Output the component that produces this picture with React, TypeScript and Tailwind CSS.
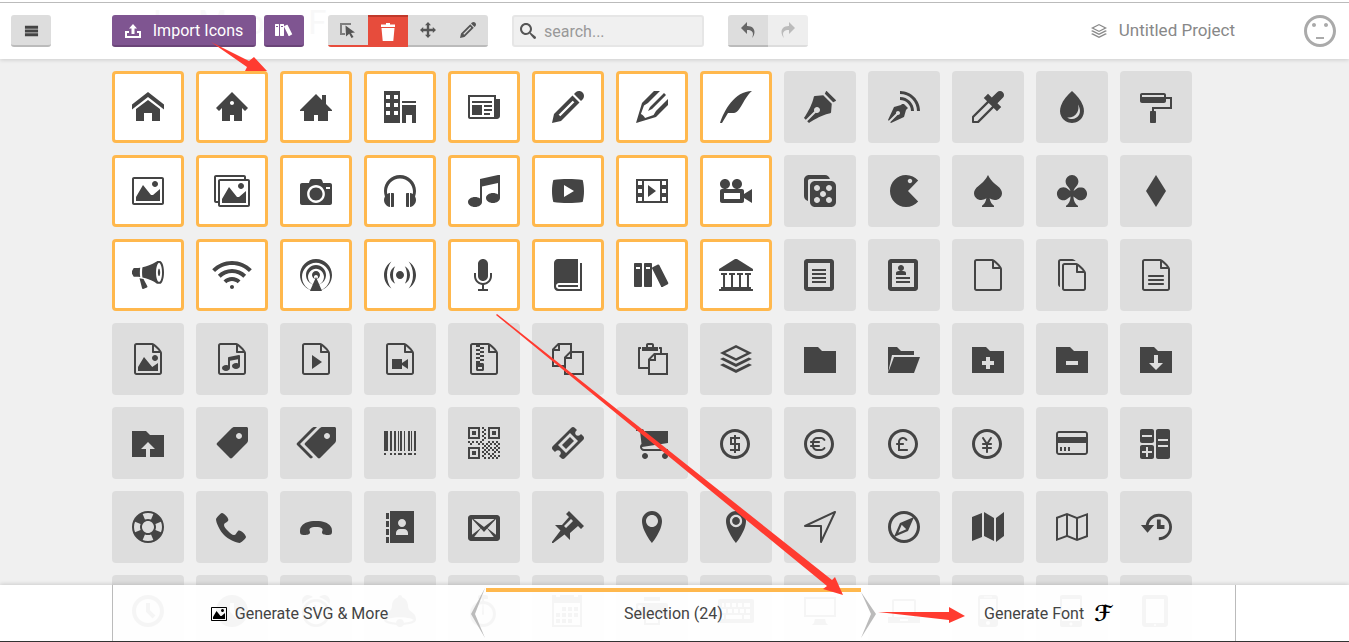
import { IconType } from "react-icons";
import {
  ImHome, ImHome2, ImHome3, ImOffice, ImNewspaper, ImPencil, ImPencil2, ImQuill, ImPen, ImBlog, ImEyedropper, ImDroplet, ImPaintFormat,
  ImImage, ImImages, ImCamera, ImHeadphones, ImMusic, ImPlay, ImFilm, ImVideoCamera, ImDice, ImPacman, ImSpades, ImClubs, ImDiamonds,
  ImBullhorn, ImConnection, ImPodcast, ImFeed, ImMic, ImBook, ImBooks, ImLibrary, ImFileText, ImProfile, ImFileEmpty, ImFilesEmpty, ImFileText2,
  ImFilePicture, ImFileMusic, ImFilePlay, ImFileVideo, ImFileZip, ImCopy, ImPaste, ImStack, ImFolder, ImFolderOpen, ImFolderPlus, ImFolderMinus, ImFolderDownload,
  ImFolderUpload, ImPriceTag, ImPriceTags, ImBarcode, ImQrcode, ImTicket, ImCart, ImCoinDollar, ImCoinEuro, ImCoinPound, ImCoinYen, ImCreditCard, ImCalculator,
  ImLifebuoy, ImPhone, ImPhoneHangUp, ImAddressBook, ImEnvelop, ImPushpin, ImLocation, ImLocation2, ImCompass, ImCompass2, ImMap, ImMap2, ImHistory,
  ImClock, ImClock2, ImAlarm, ImBell, ImStopwatch, ImCalendar, ImPrinter, ImKeyboard, ImDisplay, ImLaptop, ImMobile, ImMobile2, ImTablet,
  ImMenu, ImSearch, ImUndo2, ImRedo2, ImNeutral,
} from "react-icons/im";

const ICONS: IconType[] = [
  ImHome, ImHome2, ImHome3, ImOffice, ImNewspaper, ImPencil, ImPencil2, ImQuill, ImPen, ImBlog, ImEyedropper, ImDroplet, ImPaintFormat,
  ImImage, ImImages, ImCamera, ImHeadphones, ImMusic, ImPlay, ImFilm, ImVideoCamera, ImDice, ImPacman, ImSpades, ImClubs, ImDiamonds,
  ImBullhorn, ImConnection, ImPodcast, ImFeed, ImMic, ImBook, ImBooks, ImLibrary, ImFileText, ImProfile, ImFileEmpty, ImFilesEmpty, ImFileText2,
  ImFilePicture, ImFileMusic, ImFilePlay, ImFileVideo, ImFileZip, ImCopy, ImPaste, ImStack, ImFolder, ImFolderOpen, ImFolderPlus, ImFolderMinus, ImFolderDownload,
  ImFolderUpload, ImPriceTag, ImPriceTags, ImBarcode, ImQrcode, ImTicket, ImCart, ImCoinDollar, ImCoinEuro, ImCoinPound, ImCoinYen, ImCreditCard, ImCalculator,
  ImLifebuoy, ImPhone, ImPhoneHangUp, ImAddressBook, ImEnvelop, ImPushpin, ImLocation, ImLocation2, ImCompass, ImCompass2, ImMap, ImMap2, ImHistory,
  ImClock, ImClock2, ImAlarm, ImBell, ImStopwatch, ImCalendar, ImPrinter, ImKeyboard, ImDisplay, ImLaptop, ImMobile, ImMobile2, ImTablet,
];

// these glyphs are wider than their em box in the icon font
const wideIcon = (Icon: IconType) => {
  if (Icon === ImConnection || Icon === ImPriceTags) return "h-8 w-8 scale-[1.25]";
  if (Icon === ImImages || Icon === ImBooks || Icon === ImKeyboard) return "h-8 w-8 scale-[1.125]";
  if (Icon === ImLibrary) return "h-8 w-8 scale-[1.06]";
  return "h-8 w-8";
};

const isSelected = (i: number) => i % 13 < 8 && i < 39;

function ImportGlyph() {
  return (
    <svg width="16" height="14" viewBox="0 0 16 14" fill="#fff">
      <path d="M8 0l4 4.500H9.500V10h-3V4.500H4z" />
      <path d="M0 7h4v2H2v3h12V9h-2V7h4v7H0z" />
    </svg>
  );
}

function SelectTool() {
  return (
    <svg width="16" height="16" viewBox="0 0 16 16" fill="#555">
      <path d="M0 1h11v2H2v8h3v2H0z" opacity="0.7" />
      <path d="M5.500 3.500l9.500 7-4 .5 2.500 4-2 1-2.300-4.200L6 14.500z" />
    </svg>
  );
}

function TrashTool() {
  return (
    <svg width="16" height="18" viewBox="0 0 16 18" fill="#fff">
      <path d="M6 0h4v1.500h5V4H1V1.500h5z" />
      <path d="M1.500 5h13l-1.200 13H2.700z" />
    </svg>
  );
}

function MoveTool() {
  return (
    <svg width="16" height="16" viewBox="0 0 16 16" fill="#555">
      <path d="M8 0l3 3.200H9.200V6.800H12.800V5l3.200 3-3.200 3V9.200H9.200v3.600H11L8 16l-3-3.200h1.800V9.200H3.200V11L0 8l3.200-3v1.800h3.600V3.200H5z" />
    </svg>
  );
}

export default function App() {
  return (
    <div className="relative h-[642px] w-[1349px] overflow-hidden bg-[#f0f0f0] font-['Roboto',sans-serif] text-[#444]">
      {/* top bar */}
      <header className="relative z-10 h-[59px] bg-white pt-[2px] shadow-[0_1px_4px_rgba(0,0,0,0.15)]">
        <span className="absolute left-[153px] top-[-2px] text-[33px] text-[#f8f8f8]">IcoMoon - Free</span>
        <div className="relative flex h-[57px] items-start border-t border-[#bbb] pl-[11px] pr-[13px] pt-3">
          <button className="flex h-8 w-10 items-center justify-center rounded-[3px] border-b-2 border-[#bbb] bg-[#ddd]">
            <ImMenu size={15} />
          </button>
          <button className="ml-[61px] flex h-8 w-[144px] items-center justify-center gap-3 rounded-[3px] border-b-2 border-[#6a4578] bg-[#7f5591] pt-[2px] text-[16px] text-white">
            <ImportGlyph />
            Import Icons
          </button>
          <button className="ml-2 flex h-8 w-10 items-center justify-center rounded-[3px] border-b-2 border-[#6a4578] bg-[#7f5591] text-white">
            <ImBooks size={18} />
          </button>
          <div className="ml-6 flex h-8 w-40 overflow-hidden rounded-[3px]">
            <div className="flex w-10 items-center justify-center border-b-2 border-[#e74c3c] bg-[#ddd]"><SelectTool /></div>
            <div className="flex w-10 items-center justify-center border-t-2 border-[#c0392b] bg-[#e74c3c]"><TrashTool /></div>
            <div className="flex w-10 items-center justify-center border-b-2 border-[#bbb] bg-[#ddd]"><MoveTool /></div>
            <div className="flex w-10 items-center justify-center border-b-2 border-[#bbb] bg-[#ddd] text-[#555]"><ImPencil size={16} /></div>
          </div>
          <div className="ml-6 flex h-8 w-48 items-center gap-2 rounded-[3px] border-2 border-[#e6e6e6] bg-[#f0f0f0] pl-[6px] text-[16px] text-[#999]">
            <ImSearch size={16} className="text-[#555]" />
            <span className="pt-[2px]">search...</span>
          </div>
          <div className="ml-6 flex h-8 w-20 overflow-hidden rounded-[3px]">
            <div className="flex w-10 items-center justify-center border-b-2 border-[#bbb] bg-[#ddd] text-[#666]"><ImUndo2 size={16} /></div>
            <div className="flex w-10 items-center justify-center border-b-2 border-[#ddd] bg-[#eee] text-[#bbb]"><ImRedo2 size={16} /></div>
          </div>
          <div className="ml-auto flex h-8 items-center gap-3 text-[17px] text-[#888]">
            <ImStack size={16} />
            <span>Untitled Project</span>
          </div>
          <ImNeutral size={32} className="ml-[69px] text-[#aaa]" />
        </div>
      </header>

      {/* icon grid */}
      <div className="grid grid-cols-[repeat(13,72px)] gap-3 pl-[112px] pt-3">
        {ICONS.map((Icon, i) => (
          <div
            key={i}
            className={
              isSelected(i)
                ? "flex h-[72px] items-center justify-center rounded-[4px] border-[3px] border-[#ffb84d] bg-white"
                : "flex h-[72px] items-center justify-center rounded-[4px] bg-[#ddd]"
            }
          >
            <Icon className={wideIcon(Icon)} />
          </div>
        ))}
      </div>

      {/* bottom bar */}
      <footer className="absolute inset-x-0 bottom-0 z-10 h-[57px] border-b border-[#333] bg-white/95 pl-[112px] shadow-[0_-1px_4px_rgba(0,0,0,0.15)]">
        <div className="flex h-full w-[1124px] border-x border-[#bbb] text-[16px] text-[#444]">
          <div className="flex w-[373px] items-center justify-center gap-2 pt-[1px]">
            <ImImage size={16} className="text-black" />
            Generate SVG &amp; More
          </div>
          <div className="mt-[3px] flex w-[375px] items-center justify-center border-t-[4px] border-[#ffb84d] pb-[5px]">
            Selection (24)
          </div>
          <div className="flex flex-1 items-center justify-center gap-[10px] pt-[1px]">
            Generate Font
            <span className="font-['DejaVu_Sans',sans-serif] text-[22px] font-bold italic text-black">ℱ</span>
          </div>
        </div>
      </footer>
      <svg className="absolute left-[470px] top-[586px] z-10" width="408" height="56" viewBox="0 0 408 56">
        <path d="M15 2 L1 28 L15 52 L5 28Z" fill="#bbb" />
        <path d="M391 6 L406 28 L391 52 L401 28Z" fill="#bbb" />
      </svg>

      {/* red annotation arrows */}
      <svg className="absolute inset-0 z-20" width="1349" height="642" viewBox="0 0 1349 642">
        <g fill="#ff3b30">
          <path d="M211 42 L249 61 L254 57 L267 71 L245 71 L247 67Z" />
          <path d="M497 314 L832 580 L835 577 L843 595 L823 589 L827 586 L496 315Z" />
          <path d="M878 612 L949 612 L949 607 L965 616 L949 623 L949 620Z" />
        </g>
      </svg>
    </div>
  );
}
